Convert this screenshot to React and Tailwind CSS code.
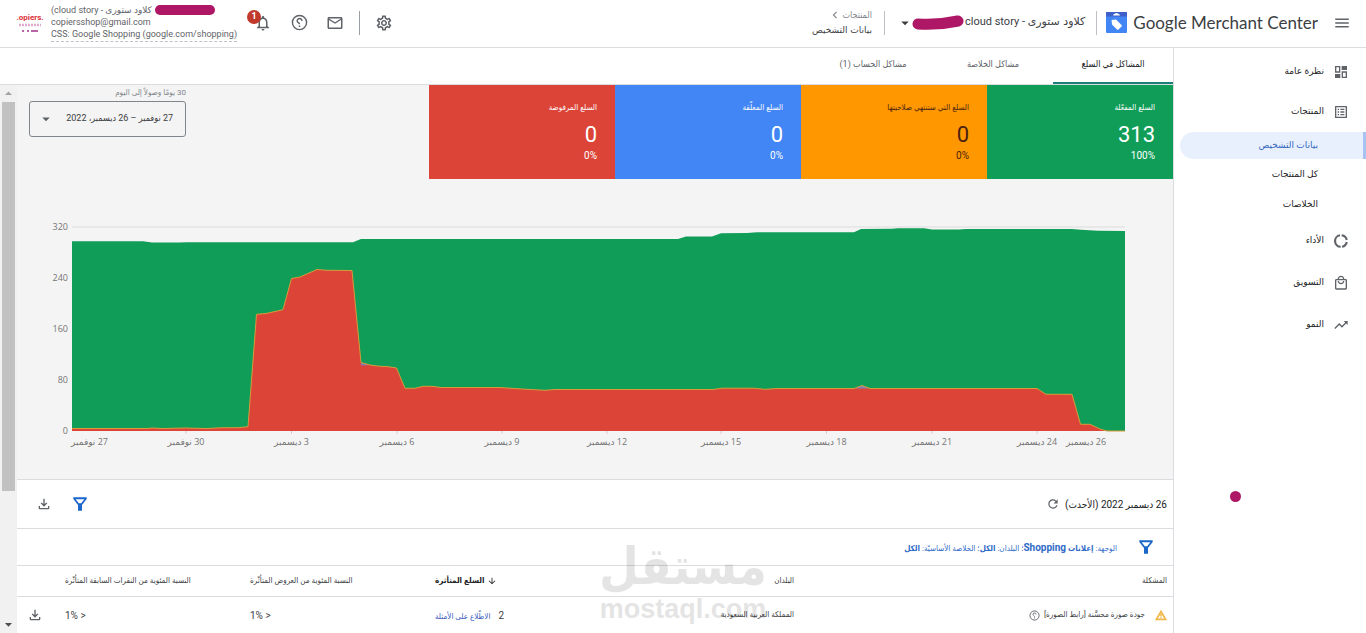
import React from "react";
import {
  MdMenu,
  MdOutlineSettings,
  MdMailOutline,
  MdNotificationsNone,
  MdOutlineListAlt,
  MdOutlineLocalMall,
  MdTrendingUp,
  MdOutlineFileDownload,
  MdRefresh,
  MdArrowDropDown,
  MdArrowDropUp,
  MdArrowDownward,
  MdChevronLeft,
} from "react-icons/md";

const HelpIcon = ({ className }) => (
  <svg viewBox="0 0 24 24" className={className} fill="none" stroke="currentColor" strokeWidth="2" aria-hidden="true">
    <circle cx="12" cy="12" r="10" />
    <path d="M15.5 9.8A3.4 3.4 0 1 0 8.7 9.8c0 2.5 3.3 2.2 3.3 4.7" />
    <path d="M12 16.2v2.200" />
  </svg>
);

const FunnelIcon = ({ className }) => (
  <svg viewBox="0 0 24 24" className={className} aria-hidden="true">
    <path fill="currentColor" fillRule="evenodd" d="M2 2h20v2.500l-7 9V22H9v-8.500l-7-9zM5.500 4.800l4.700 6h3.600l4.700-6z" />
  </svg>
);

const DashboardIcon = ({ className }) => (
  <svg viewBox="0 0 24 24" className={className} aria-hidden="true">
    <path fill="currentColor" d="M13 3h8v6h-8zM3 15h8v6H3z" />
    <path fill="none" stroke="currentColor" strokeWidth="2" d="M4 4h6v8H4zM14 12h6v8h-6z" />
  </svg>
);

const DonutIcon = ({ className }) => (
  <svg viewBox="0 0 24 24" className={className} fill="none" stroke="currentColor" strokeWidth="3.2" aria-hidden="true">
    <path d="M13 3.300a8.700 8.700 0 0 1 7.600 7.200M20.600 13.500a8.700 8.700 0 0 1-7.100 7.100M11.500 20.700a8.700 8.700 0 0 1-1-17.300" />
  </svg>
);

const WarningIcon = ({ className }) => (
  <svg viewBox="0 0 24 24" className={className} aria-hidden="true">
    <path fill="none" stroke="currentColor" strokeWidth="3.5" d="M12 5 2.800 20.500h18.400z" />
    <path fill="currentColor" d="M10.500 10h3v5h-3zM10.500 16.300h3v2.400h-3z" />
  </svg>
);

const MerchantLogo = () => (
  <svg viewBox="0 0 42 42" className="h-[21px] w-[21px]" aria-hidden="true">
    <rect width="42" height="42" rx="2" fill="#4285f4" />
    <path d="M2 0h38a2 2 0 0 1 2 2v7H0V2a2 2 0 0 1 2-2z" fill="#3f5fc9" />
    <path d="M14 7c1-3 3-3 7-5 4 2 6 2 7 5z" fill="#fff" />
    <path d="M11 16l9-1 11 11c1 1 1 2 0 3l-6 6c-1 1-2 1-3 0L12 25z" fill="#fff" />
  </svg>
);

const IconButton = ({ label, children }) => (
  <button type="button" aria-label={label} className="relative flex h-6 w-6 items-center justify-center text-[#5f6368]">
    {children}
  </button>
);

function Header() {
  return (
    <header className="flex h-12 shrink-0 items-center border-b border-[#dadce0] bg-white pr-3 pb-[2px] pl-[17px]">
      <IconButton label="القائمة">
        <MdMenu className="h-[18px] w-[18px]" />
      </IconButton>
      <div dir="ltr" className="mr-3 flex items-center gap-[6px] text-[#3c4043]">
        <MerchantLogo />
        <span className="font-['Lato',sans-serif] text-[17px] leading-6 whitespace-nowrap">
          Google Merchant Center
        </span>
      </div>
      <span className="mr-[9px] h-6 w-px bg-[#bdc1c6]" />
      <button type="button" dir="ltr" className="mr-[11px] flex items-center text-[11px] text-[#3c4043]">
        <MdArrowDropDown className="h-[18px] w-[18px] shrink-0" />
        <svg viewBox="0 0 54 15" className="-ml-[3px] h-[15px] w-[54px]" aria-hidden="true">
          <path d="M7 9c14 1 26 0 40-3" fill="none" stroke="#ad1765" strokeWidth="11" strokeLinecap="round" />
        </svg>
        <span className="whitespace-nowrap">cloud story - <span className="font-['DejaVu_Sans',sans-serif]">كلاود ستورى</span></span>
      </button>
      <span className="mr-[11px] h-6 w-px bg-[#bdc1c6]" />
      <nav className="mr-3 flex flex-col text-[9px] leading-[15px]">
        <a href="#products" className="flex items-center text-[#80868b]">
          المنتجات
          <MdChevronLeft className="h-[14px] w-[14px]" />
        </a>
        <span className="font-['DejaVu_Sans',sans-serif] text-[#3c4043]">بيانات التشخيص</span>
      </nav>
      <div dir="ltr" className="mr-auto flex items-center">
        <div className="flex w-[26px] flex-col items-center leading-none" aria-label="Copiers">
          <span className="text-[8px] leading-[9px] font-bold text-[#dc2f38]">.opiers.</span>
          <svg viewBox="0 0 24 11" className="h-[11px] w-6" aria-hidden="true">
            <path d="M1 3h22" stroke="#e0a9cd" strokeWidth="2.5" strokeDasharray="2 1" />
            <path d="M4 9h2M9 9h2M13 9h7" stroke="#b765a6" strokeWidth="2" />
          </svg>
        </div>
        <div className="ml-2 flex flex-col text-[9px] leading-3 text-[#5f6368]">
          <span className="flex h-3 items-center gap-[3px] font-['Roboto','DejaVu_Sans',sans-serif] whitespace-nowrap">
            (cloud story - كلاود ستورى
            <span className="h-[10px] w-[60px] rounded-full bg-[#ad1765]" />
          </span>
          <span>copiersshop@gmail.com</span>
          <a href="#css" className="border-b border-dashed border-[#bdc1c6] pb-px whitespace-nowrap">
            CSS: Google Shopping (google.com/shopping)
          </a>
        </div>
        <div className="ml-[14px] flex items-center gap-3">
          <IconButton label="الإشعارات">
            <MdNotificationsNone className="h-[18px] w-[18px]" />
            <span className="absolute -top-[1px] -left-[4px] flex h-[14px] w-[14px] items-center justify-center rounded-full bg-[#c0392b] text-[9px] font-bold text-white">
              1
            </span>
          </IconButton>
          <IconButton label="المساعدة">
            <HelpIcon className="h-[17px] w-[17px]" />
          </IconButton>
          <IconButton label="البريد">
            <MdMailOutline className="h-[18px] w-[18px]" />
          </IconButton>
          <span className="h-6 w-px bg-[#9aa0a6]" />
          <IconButton label="الإعدادات">
            <MdOutlineSettings className="h-[18px] w-[18px]" />
          </IconButton>
        </div>
      </div>
    </header>
  );
}

const NavItem = ({ icon: Icon, label, tall }) => (
  <a href="#section" className={`flex items-center gap-[9px] pr-[17px] ${tall ? "h-[42px]" : "h-10"}`}>
    <Icon className="h-4 w-4 text-[#5f6368]" />
    {label}
  </a>
);

function Sidebar() {
  return (
    <aside className="w-[193px] shrink-0 border-l border-[#dadce0] bg-white pt-1 font-['Roboto','DejaVu_Sans',sans-serif] text-[9px] text-[#202124]">
      <nav className="flex flex-col">
        <NavItem icon={DashboardIcon} label="نظرة عامة" />
        <NavItem icon={MdOutlineListAlt} label="المنتجات" />
        <a
          href="#diagnostics"
          aria-current="page"
          className="mb-px ml-[6px] flex h-[27px] items-center rounded-l-full border-r-[3px] border-[#a8c3f2] bg-[#e8f0fe] pr-[45px] text-[#3367c0]"
        >
          بيانات التشخيص
        </a>
        <a href="#all" className="flex h-[30px] items-center pr-12">كل المنتجات</a>
        <a href="#feeds" className="flex h-[30px] items-center pr-12">الخلاصات</a>
        <NavItem tall icon={DonutIcon} label="الأداء" />
        <NavItem tall icon={MdOutlineLocalMall} label="التسويق" />
        <NavItem tall icon={MdTrendingUp} label="النمو" />
      </nav>
      <span className="absolute top-[491px] right-[125px] h-[11px] w-[11px] rounded-full bg-[#ad1765]" />
    </aside>
  );
}

function Tabs() {
  const base = "h-9 w-[120px] border-b-2 text-[9px]";
  return (
    <div role="tablist" className="flex h-[37px] shrink-0 border-b border-[#dadce0] bg-white">
      <button type="button" role="tab" aria-selected="true" className={`${base} border-[#1b7f79] text-[#202124]`}>
        المشاكل في السلع
      </button>
      <button type="button" role="tab" aria-selected="false" className={`${base} border-transparent text-[#5f6368]`}>
        مشاكل الخلاصة
      </button>
      <button type="button" role="tab" aria-selected="false" className={`${base} border-transparent text-[#5f6368]`}>
        مشاكل الحساب (1)
      </button>
    </div>
  );
}

const STATS = [
  { label: "السلع المفعّلة", value: "313", share: "100%", tone: "bg-[#0f9d58] text-white" },
  { label: "السلع التي ستنتهي صلاحيتها", value: "0", share: "0%", tone: "bg-[#ff9800] text-[#4a2210]" },
  { label: "السلع المعلّقة", value: "0", share: "0%", tone: "bg-[#4285f4] text-white" },
  { label: "السلع المرفوضة", value: "0", share: "0%", tone: "bg-[#db4437] text-white" },
];

const StatCard = ({ label, value, share, tone }) => (
  <div className={`h-[94px] w-[186px] pt-4 pr-[18px] ${tone}`}>
    <div className="text-[8px] leading-[14px]">{label}</div>
    <div className="mt-2 text-[22px] leading-6">{value}</div>
    <div dir="ltr" className="mt-[2px] text-right text-[10px] leading-[14px]">{share}</div>
  </div>
);

const PLOT_W = 1053;
const PLOT_H = 204;

const ACTIVE = [
  [0, 14.3], [71, 14.3], [80, 15.5], [107, 15.5], [115, 15.2], [281, 15.2], [289, 12], [606, 12],
  [614, 9.5], [640, 9.5], [649, 6.3], [675, 6], [685, 5.2], [782, 5.2], [789, 2], [820, 1.8],
  [826, 1.3], [852, 1.3], [860, 2.4], [887, 2.4], [894, 1.9], [1000, 1.9], [1009, 2.8], [1026, 3.8], [1053, 4],
];

const REJECTED = [
  [0, 201.5], [75, 201.5], [80, 201], [90, 201.5], [113, 201], [135, 201.5], [150, 200.7], [166, 200.7], [176, 199.7],
  [184.5, 87.3], [194, 86.5], [211, 82.7], [219.5, 51.5], [228, 50], [245, 42.5], [255, 43.3], [280, 43.5],
  [289, 135.5], [298, 138], [307, 139.2], [316, 139.7], [324.5, 141], [333, 161.3], [343, 161.3],
  [351, 159.3], [360, 159.3], [369, 160.5], [428, 160.5], [450, 162], [473, 163.3], [483, 162.5], [641, 162.5],
  [650, 161.2], [682, 161.2], [693, 162.3], [705, 161.5], [782, 161.5], [790, 158.5], [798, 161.5], [965, 161.5],
  [974, 167.3], [1000, 167.3], [1008.5, 197.3], [1018, 197.3], [1028, 202], [1035, 204], [1053, 204],
];

const toLine = (points) => points.map((p) => p.join(",")).join(" ");
const toArea = (points) => `0,${PLOT_H} ${toLine(points)} ${PLOT_W},${PLOT_H}`;

const DAYS = [
  { label: "27 نوفمبر", at: 17.5, tick: false },
  { label: "30 نوفمبر", at: 114, tick: true },
  { label: "3 ديسمبر", at: 219.5, tick: true },
  { label: "6 ديسمبر", at: 325, tick: true },
  { label: "9 ديسمبر", at: 430, tick: true },
  { label: "12 ديسمبر", at: 535, tick: true },
  { label: "15 ديسمبر", at: 649, tick: true },
  { label: "18 ديسمبر", at: 754.5, tick: true },
  { label: "21 ديسمبر", at: 860, tick: true },
  { label: "24 ديسمبر", at: 965, tick: true },
  { label: "26 ديسمبر", at: 1014, tick: false },
];

const pct = (x) => `${(x / PLOT_W) * 100}%`;

function Chart() {
  return (
    <div dir="ltr" className="mt-[41px] flex gap-1 pr-12 pl-6 font-['Open_Sans','DejaVu_Sans',sans-serif] text-[9px] text-[#757575]">
      <div className="flex h-[218px] w-[27px] flex-col justify-between text-right leading-[14px]">
        {[320, 240, 160, 80, 0].map((v) => (
          <span key={v}>{v}</span>
        ))}
      </div>
      <svg role="img" aria-label="السلع حسب اليوم" className="mt-[7px] block h-[245px] min-w-0 flex-1 overflow-visible">
        <line x1="0" x2="100%" y1="0" y2="0" stroke="#e8e8e8" strokeWidth="2" />
        <svg x="0" y="0" width="100%" height={PLOT_H} viewBox={`0 0 ${PLOT_W} ${PLOT_H}`} preserveAspectRatio="none" overflow="visible">
          <polygon points={toArea(ACTIVE)} fill="#0f9d58" />
          <polygon points={toArea(REJECTED)} fill="#db4437" />
          <polygon points="782,161.5 790,158.5 798,161.5" fill="#7f7fb5" />
          <polygon points="289,135.5 289,138.5 298,138" fill="#7f7fb5" />
          <polyline points={toLine(REJECTED)} fill="none" stroke="#d99a3c" strokeWidth="1" />
        </svg>
        {DAYS.map((d) => (
          <g key={d.label}>
            {d.tick && <line x1={pct(d.at)} x2={pct(d.at)} y1="204" y2="207" stroke="#e0c9c6" />}
            <text x={pct(d.at)} y="218" textAnchor="middle" direction="rtl" fill="#757575">
              {d.label}
            </text>
          </g>
        ))}
      </svg>
    </div>
  );
}

function Summary() {
  return (
    <section className="h-[395px] border-b border-[#dadce0] bg-[#f4f4f4]">
      <div className="flex items-start">
        {STATS.map((s) => (
          <StatCard key={s.label} {...s} />
        ))}
        <div className="mr-auto ml-3 w-[157px]">
          <div className="text-[8px] leading-4 text-[#80868b]">30 يومًا وصولاً إلى اليوم</div>
          <button
            type="button"
            className="flex h-9 w-full items-center justify-between rounded-[3px] border border-[#80868b] pr-3 pl-[7px] text-[9px] text-[#3c4043]"
          >
            <span className="whitespace-nowrap">27 نوفمبر – 26 ديسمبر، 2022</span>
            <MdArrowDropDown className="h-[18px] w-[18px] shrink-0 text-[#5f6368]" />
          </button>
        </div>
      </div>
      <Chart />
    </section>
  );
}

function Issues() {
  const head = "h-[31px] border-b border-[#dadce0] font-normal whitespace-nowrap";
  const cell = "h-9 whitespace-nowrap";
  return (
    <section className="bg-white">
      <div className="flex h-[49px] items-center border-b border-[#dadce0] pr-[6px] pl-[19px]">
        <span className="text-[10px] text-[#202124]">26 ديسمبر 2022 (الأحدث)</span>
        <button type="button" aria-label="تحديث" className="mr-1 flex h-4 w-4 items-center justify-center text-[#5f6368]">
          <MdRefresh className="h-[14px] w-[14px]" />
        </button>
        <div className="mr-auto flex items-center gap-5">
          <button type="button" aria-label="تصفية" className="text-[#1a66c9]">
            <FunnelIcon className="h-4 w-4" />
          </button>
          <button type="button" aria-label="تنزيل" className="text-[#5f6368]">
            <MdOutlineFileDownload className="h-4 w-4" />
          </button>
        </div>
      </div>
      <button type="button" className="flex h-[37px] w-full items-center gap-[21px] border-b border-[#dadce0] pr-[19px] text-[8px] text-[#2f6bc7]">
        <FunnelIcon className="h-4 w-4 text-[#1a66c9]" />
        <span className="whitespace-nowrap">
          الوجهة: <b>إعلانات <span className="text-[10px]">Shopping</span></b>؛ البلدان: <b>الكل</b>؛ الخلاصة الأساسيّة: <b>الكل</b>
        </span>
      </button>
      <table className="w-full table-fixed border-separate border-spacing-0 text-[8px] text-[#3c4043]">
        <colgroup>
          <col />
          <col className="w-[276px]" />
          <col className="w-[83px]" />
          <col className="w-[185px]" />
          <col className="w-[185px]" />
          <col className="w-12" />
        </colgroup>
        <thead>
          <tr>
            <th scope="col" className={`${head} pr-[6px] text-right`}>المشكلة</th>
            <th scope="col" className={`${head} text-right`}>البلدان</th>
            <th scope="col" className={`${head} text-left`}>
              <span className="flex items-center justify-end gap-[3px] font-bold text-[#202124]">
                <MdArrowDownward className="h-[10px] w-[10px]" />
                السلع المتأثرة
              </span>
            </th>
            <th scope="col" className={`${head} text-left`}>النسبة المئوية من العروض المتأثّرة</th>
            <th scope="col" className={`${head} text-left`}>النسبة المئوية من النقرات السابقة المتأثّرة</th>
            <td className={head} />
          </tr>
        </thead>
        <tbody>
          <tr>
            <td className={`${cell} pr-[6px]`}>
              <span className="flex items-center">
                <WarningIcon className="ml-[10px] h-3 w-3 text-[#f2b84b]" />
                جودة صورة محسَّنة [رابط الصورة]
                <HelpIcon className="mr-1 h-[11px] w-[11px] text-[#5f6368]" />
              </span>
            </td>
            <td className={cell}>المملكة العربية السعودية</td>
            <td className={`${cell} text-left`}>
              <span className="text-[10px]">2</span>
              <a href="#examples" className="mr-2 text-[#3b5bbd]">الاطّلاع على الأمثلة</a>
            </td>
            <td className={`${cell} text-left text-[10px]`}><span dir="ltr">1% &gt;</span></td>
            <td className={`${cell} text-left text-[10px]`}><span dir="ltr">1% &gt;</span></td>
            <td className={cell}>
              <button type="button" aria-label="تنزيل" className="mr-auto ml-[10px] flex w-4 text-[#5f6368]">
                <MdOutlineFileDownload className="h-4 w-4 shrink-0" />
              </button>
            </td>
          </tr>
        </tbody>
      </table>
    </section>
  );
}

const ScrollTrack = () => (
  <div aria-hidden="true" className="flex w-[17px] shrink-0 flex-col items-center justify-between bg-[#f1f1f1]">
    <MdArrowDropUp className="h-[17px] w-[17px] shrink-0 text-[#a3a3a3]" />
    <div className="mb-auto h-[71%] w-[13px] bg-[#c1c1c1]" />
    <MdArrowDropDown className="h-[17px] w-[17px] shrink-0 text-[#505050]" />
  </div>
);

export default function App() {
  return (
    <div dir="rtl" className="relative flex h-screen flex-col overflow-hidden bg-white font-['Roboto','DejaVu_Sans_Condensed','DejaVu_Sans',sans-serif]">
      <Header />
      <div className="flex min-h-0 flex-1">
        <Sidebar />
        <div className="flex min-w-0 flex-1 flex-col">
          <Tabs />
          <div className="flex min-h-0 flex-1">
            <main className="min-w-0 flex-1 overflow-hidden">
              <Summary />
              <Issues />
            </main>
            <ScrollTrack />
          </div>
        </div>
      </div>
      <div aria-hidden="true" className="pointer-events-none absolute inset-x-0 bottom-3 flex flex-col items-center text-black opacity-10">
        <span className="font-['DejaVu_Sans_Condensed','DejaVu_Sans',sans-serif] text-[51px] leading-[60px] font-bold">مستقل</span>
        <span className="font-['Liberation_Sans',sans-serif] text-[27px] leading-6 font-bold">mostaql.com</span>
      </div>
    </div>
  );
}
